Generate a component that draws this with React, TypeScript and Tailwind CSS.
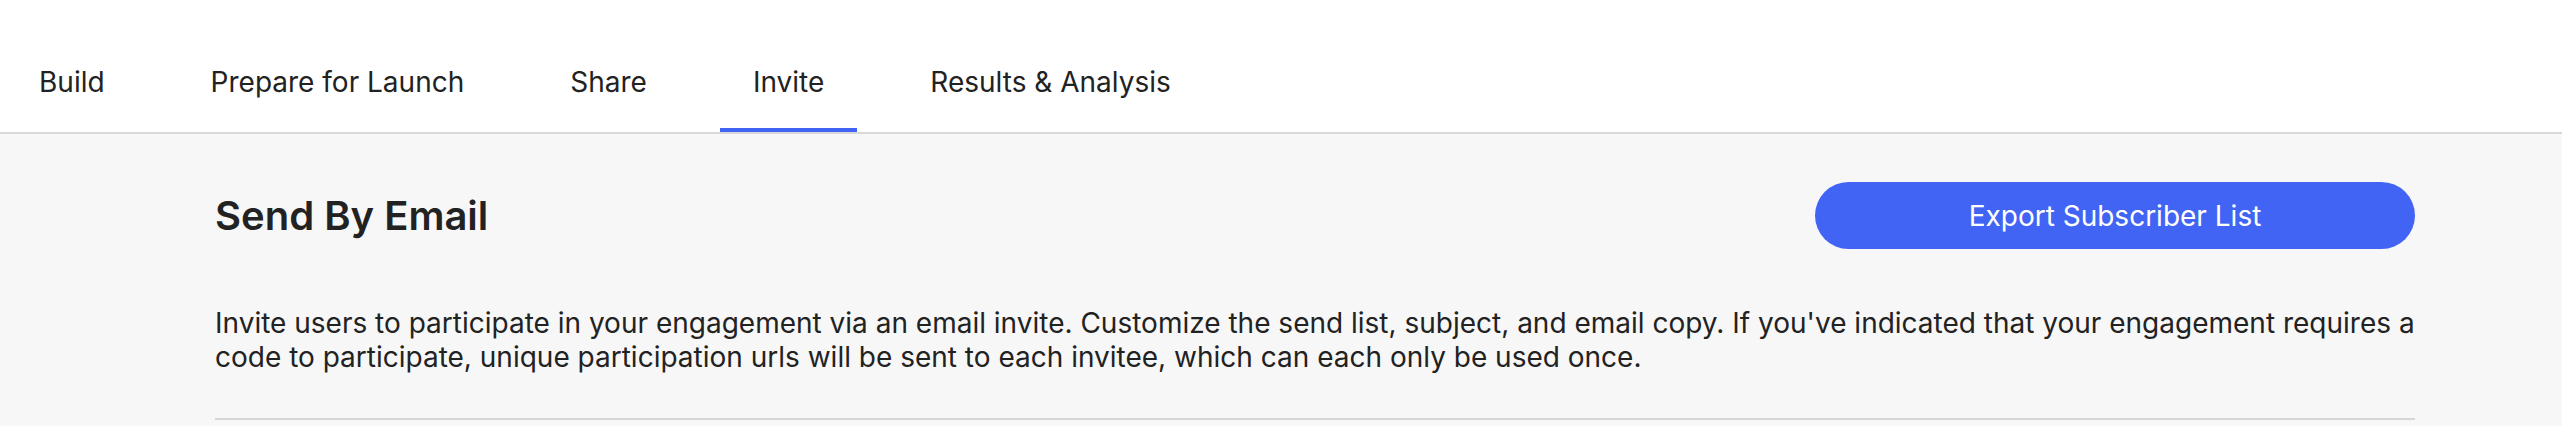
export default function App() {
  const tabs = ["Build", "Prepare for Launch", "Share", "Invite", "Results & Analysis"];
  const active = "Invite";

  return (
    <div className="min-h-screen bg-[#f7f7f7] font-['Inter',sans-serif] text-[#222]">
      {/* tab bar */}
      <div className="bg-white border-b-2 border-[#d9d9d9]">
        <nav className="flex h-[132px] items-stretch gap-[40px] pl-[6px]">
          {tabs.map((tab) => (
            <div
              key={tab}
              className={
                "flex items-center px-[33px] pt-[36px] text-[28px] border-b-4 " +
                (tab === active ? "border-[#4164f5]" : "border-transparent")
              }
            >
              {tab}
            </div>
          ))}
        </nav>
      </div>

      {/* content */}
      <main className="ml-[215px] w-[2200px] pt-[48px]">
        <div className="flex items-center justify-between">
          <h1 className="text-[40px] font-semibold">Send By Email</h1>
          <button className="h-[67px] w-[600px] rounded-full bg-[#4164f5] text-[28px] text-white">
            Export Subscriber List
          </button>
        </div>
        <p className="mt-[57px] text-[28px] leading-[34px]">
          Invite users to participate in your engagement via an email invite. Customize the send list, subject, and email
          copy. If you've indicated that your engagement requires a code to participate, unique participation urls will be
          sent to each invitee, which can each only be used once.
        </p>
        <div className="mt-[44px] h-[2px] bg-[#d6d6d6]" />
      </main>
    </div>
  );
}
